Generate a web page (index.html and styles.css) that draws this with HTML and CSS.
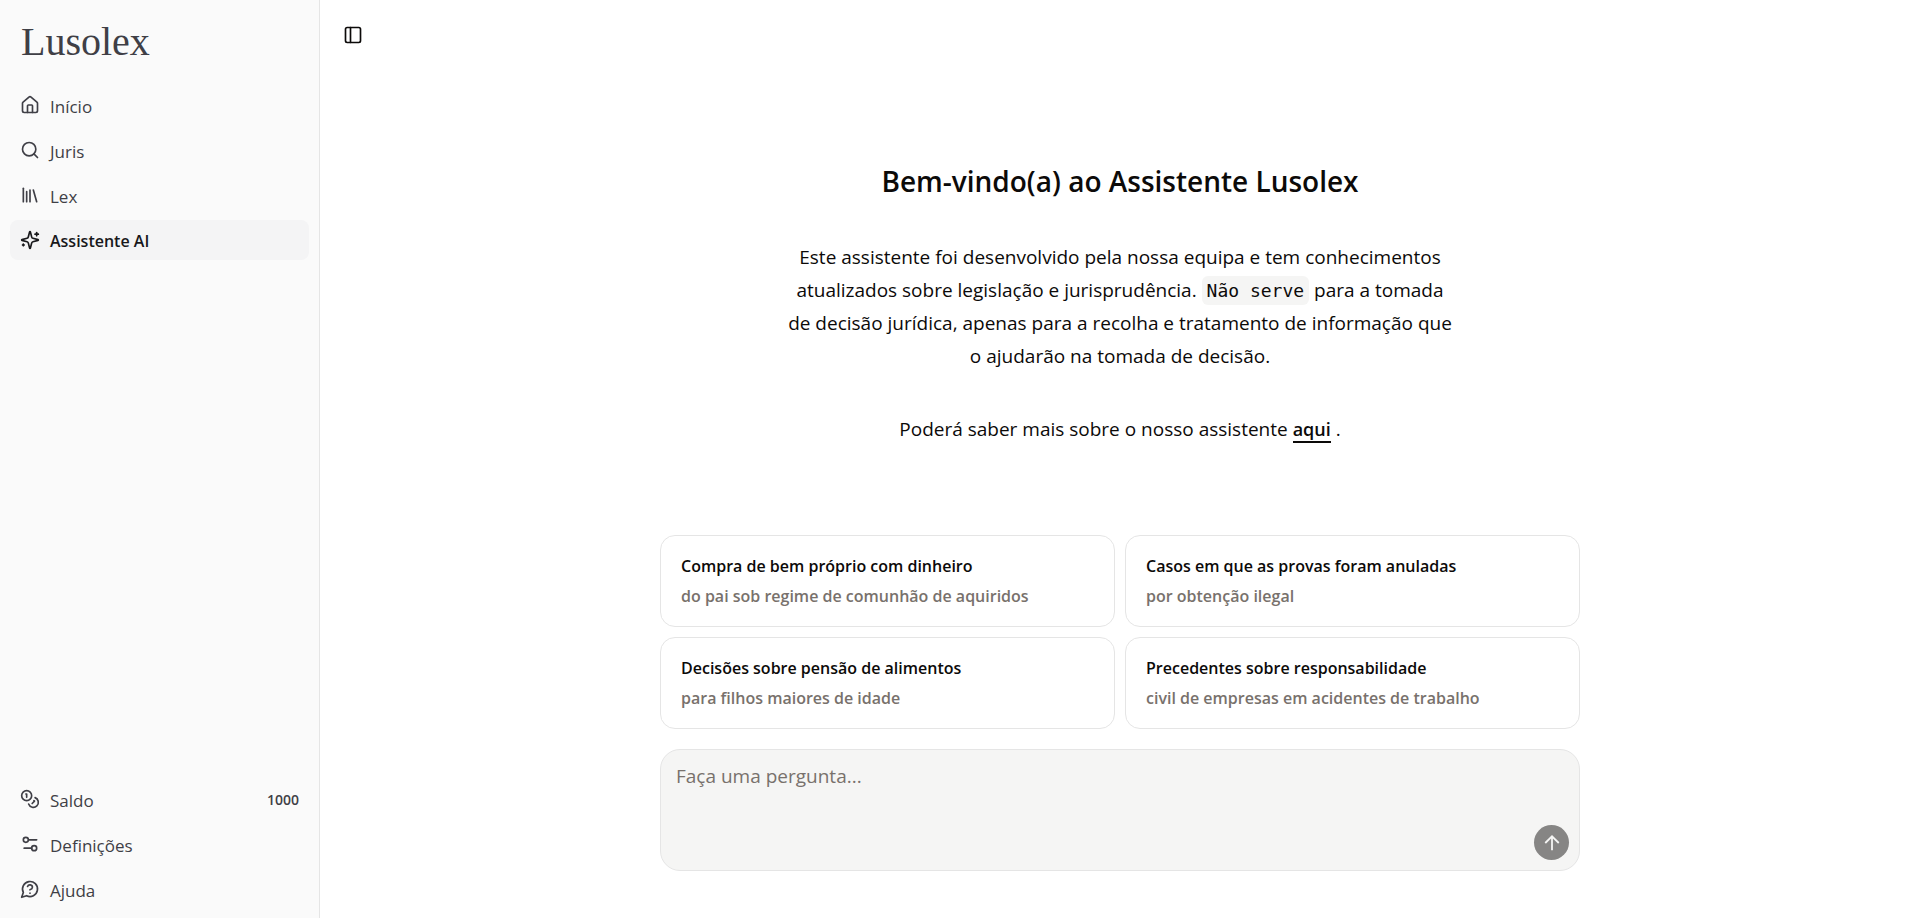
FILE: index.html
```html
<!DOCTYPE html>
<html lang="pt">
<head>
<meta charset="utf-8">
<title>Lusolex</title>
<meta name="viewport" content="width=device-width, initial-scale=1">
<link rel="stylesheet" href="styles.css">
</head>
<body>
<div class="app">
  <aside class="sidebar">
    <a class="brand" href="#">Lusolex</a>
    <nav class="nav" aria-label="Principal">
      <a class="nav-item" href="#">
        <svg class="icon" viewBox="0 0 24 24" aria-hidden="true"><path d="M15 21v-8a1 1 0 0 0-1-1h-4a1 1 0 0 0-1 1v8"/><path d="M3 10a2 2 0 0 1 .709-1.528l7-5.999a2 2 0 0 1 2.582 0l7 5.999A2 2 0 0 1 21 10v9a2 2 0 0 1-2 2H5a2 2 0 0 1-2-2z"/></svg>
        <span class="nav-label">Início</span>
      </a>
      <a class="nav-item" href="#">
        <svg class="icon" viewBox="0 0 24 24" aria-hidden="true"><circle cx="11" cy="11" r="8"/><path d="m21 21-4.3-4.3"/></svg>
        <span class="nav-label">Juris</span>
      </a>
      <a class="nav-item" href="#">
        <svg class="icon" viewBox="0 0 24 24" aria-hidden="true"><path d="m16 6 4 14"/><path d="M12 6v14"/><path d="M8 8v12"/><path d="M4 4v16"/></svg>
        <span class="nav-label">Lex</span>
      </a>
      <a class="nav-item nav-item-active" href="#" aria-current="page">
        <svg class="icon" viewBox="0 0 24 24" aria-hidden="true"><path d="M9.937 15.5A2 2 0 0 0 8.5 14.063l-6.135-1.582a.5.5 0 0 1 0-.962L8.5 9.936A2 2 0 0 0 9.937 8.5l1.582-6.135a.5.5 0 0 1 .963 0L14.063 8.5A2 2 0 0 0 15.5 9.937l6.135 1.581a.5.5 0 0 1 0 .964L15.5 14.063a2 2 0 0 0-1.437 1.437l-1.582 6.135a.5.5 0 0 1-.963 0z"/><path d="M20 3v4"/><path d="M22 5h-4"/><path d="M4 17v2"/><path d="M5 18H3"/></svg>
        <span class="nav-label">Assistente AI</span>
      </a>
    </nav>
    <nav class="nav nav-bottom" aria-label="Conta">
      <a class="nav-item" href="#">
        <svg class="icon" viewBox="0 0 24 24" aria-hidden="true"><circle cx="8" cy="8" r="6"/><path d="M18.09 10.37A6 6 0 1 1 10.34 18"/><path d="M7 6h1v4"/><path d="m16.71 13.88.7.71-2.82 2.82"/></svg>
        <span class="nav-label">Saldo</span>
        <span class="nav-badge">1000</span>
      </a>
      <a class="nav-item" href="#">
        <svg class="icon" viewBox="0 0 24 24" aria-hidden="true"><path d="M20 7h-9"/><path d="M14 17H5"/><circle cx="17" cy="17" r="3"/><circle cx="7" cy="7" r="3"/></svg>
        <span class="nav-label">Definições</span>
      </a>
      <a class="nav-item" href="#">
        <svg class="icon" viewBox="0 0 24 24" aria-hidden="true"><path d="M7.9 20A9 9 0 1 0 4 16.1L2 22Z"/><path d="M9.09 9a3 3 0 0 1 5.83 1c0 2-3 3-3 3"/><path d="M12 17h.01"/></svg>
        <span class="nav-label">Ajuda</span>
      </a>
    </nav>
  </aside>

  <main class="main">
    <header class="topbar">
      <button class="toggle" type="button" aria-label="Alternar barra lateral">
        <svg class="icon" viewBox="0 0 24 24" aria-hidden="true"><rect width="18" height="18" x="3" y="3" rx="2"/><path d="M9 3v18"/></svg>
      </button>
    </header>

    <section class="intro">
      <h1 class="intro-title">Bem-vindo(a) ao Assistente Lusolex</h1>
      <p class="intro-text">Este assistente foi desenvolvido pela nossa equipa e tem conhecimentos<br>atualizados sobre legislação e jurisprudência. <code class="code">Não serve</code> para a tomada<br>de decisão jurídica, apenas para a recolha e tratamento de informação que<br>o ajudarão na tomada de decisão.</p>
      <p class="intro-text">Poderá saber mais sobre o nosso assistente <a class="link" href="#">aqui</a> .</p>
    </section>

    <div class="composer">
      <div class="suggestions">
        <button class="card" type="button"><span class="card-title">Compra de bem próprio com dinheiro</span><span class="card-sub">do pai sob regime de comunhão de aquiridos</span></button>
        <button class="card" type="button"><span class="card-title">Casos em que as provas foram anuladas</span><span class="card-sub">por obtenção ilegal</span></button>
        <button class="card" type="button"><span class="card-title">Decisões sobre pensão de alimentos</span><span class="card-sub">para filhos maiores de idade</span></button>
        <button class="card" type="button"><span class="card-title">Precedentes sobre responsabilidade</span><span class="card-sub">civil de empresas em acidentes de trabalho</span></button>
      </div>
      <form class="prompt">
        <textarea class="prompt-input" aria-label="Pergunta" placeholder="Faça uma pergunta..."></textarea>
        <button class="send" type="submit" aria-label="Enviar" disabled>
          <svg class="send-icon" viewBox="0 0 16 16" aria-hidden="true"><path d="M8 14.5V2M2 8l6-6 6 6"/></svg>
        </button>
      </form>
    </div>
  </main>
</div>
</body>
</html>
```
FILE: styles.css
```css
*,
*::before,
*::after {
  box-sizing: border-box;
}

body {
  margin: 0;
  font-family: "Open Sans", "Noto Sans", sans-serif;
  color: #0c0a09;
  background: #fff;
}

button,
textarea {
  font: inherit;
  color: inherit;
}

a {
  color: inherit;
  text-decoration: none;
}

.app {
  display: flex;
  min-height: 100vh;
}

/* Sidebar */
.sidebar {
  display: flex;
  flex: 0 0 320px;
  flex-direction: column;
  padding: 17px 10px 9px;
  border-right: 1px solid #e5e5e5;
  background: #fafafa;
  color: #3f3f46;
}

.brand {
  padding: 0 11px;
  font-family: "Liberation Serif", serif;
  font-size: 40px;
  line-height: 50px;
}

.nav {
  display: flex;
  flex-direction: column;
  gap: 5px;
  padding-top: 18px;
}

.nav-bottom {
  margin-top: auto;
}

.nav-item {
  display: flex;
  align-items: center;
  gap: 10px;
  height: 40px;
  padding: 0 10px;
  border-radius: 8px;
  font-size: 17px;
  font-weight: 400;
}

.nav-item-active {
  background: #f4f4f5;
  color: #18181b;
  font-size: 16px;
  font-weight: 600;
}

.nav-label {
  padding-top: 2px;
}

.nav-badge {
  margin-left: auto;
  font-size: 14px;
  font-weight: 600;
}

.icon {
  flex: none;
  width: 20px;
  height: 20px;
  fill: none;
  stroke: currentColor;
  stroke-width: 2;
  stroke-linecap: round;
  stroke-linejoin: round;
}

/* Main column */
.main {
  display: flex;
  flex: 1;
  flex-direction: column;
  min-width: 0;
}

.topbar {
  display: flex;
  align-items: center;
  height: 70px;
  padding: 0 15px;
}

.toggle {
  display: flex;
  align-items: center;
  justify-content: center;
  width: 35px;
  height: 35px;
  padding: 0;
  border: 0;
  background: none;
}

.intro {
  display: flex;
  flex: 1;
  flex-direction: column;
  align-items: center;
  gap: 40px;
  padding: 91px 20px 40px;
  text-align: center;
}

.intro-title {
  margin: 0;
  font-size: 28px;
  font-weight: 600;
  line-height: 40px;
}

.intro-text {
  margin: 0;
  font-size: 19px;
  line-height: 33px;
}

.code {
  padding: 4px 5px;
  border-radius: 6px;
  background: #f5f5f4;
  font-family: "DejaVu Sans Mono", monospace;
  font-size: 18px;
}

.link {
  border-bottom: 2px solid currentColor;
  font-size: 18px;
  font-weight: 600;
}

.composer {
  display: flex;
  flex-direction: column;
  gap: 20px;
  width: 100%;
  max-width: 960px;
  margin: 0 auto;
  padding: 0 20px 47px;
}

.suggestions {
  display: grid;
  grid-template-columns: 1fr 1fr;
  gap: 10px;
}

.card {
  display: flex;
  flex-direction: column;
  gap: 5px;
  padding: 18px 20px 17px;
  border: 1px solid #e5e5e5;
  border-radius: 15px;
  background: #fff;
  font-size: 16px;
  font-weight: 600;
  line-height: 25px;
  text-align: left;
}

.card-sub {
  color: #78716c;
}

.prompt {
  position: relative;
  display: flex;
}

.prompt-input {
  flex: 1;
  height: 122px;
  padding: 11px 15px;
  border: 1px solid #e5e5e5;
  border-radius: 20px;
  outline: 0;
  background: #f5f5f4;
  font-size: 19px;
  line-height: 30px;
  resize: none;
}

.prompt-input::placeholder {
  color: #78716c;
  opacity: 1;
}

.send {
  position: absolute;
  right: 11px;
  bottom: 11px;
  display: flex;
  align-items: center;
  justify-content: center;
  width: 35px;
  height: 35px;
  padding: 0;
  border: 0;
  border-radius: 50%;
  background: #868584;
  color: #f5f5f4;
}

.send-icon {
  width: 18px;
  height: 18px;
  fill: none;
  stroke: currentColor;
  stroke-width: 1.6;
}
```
